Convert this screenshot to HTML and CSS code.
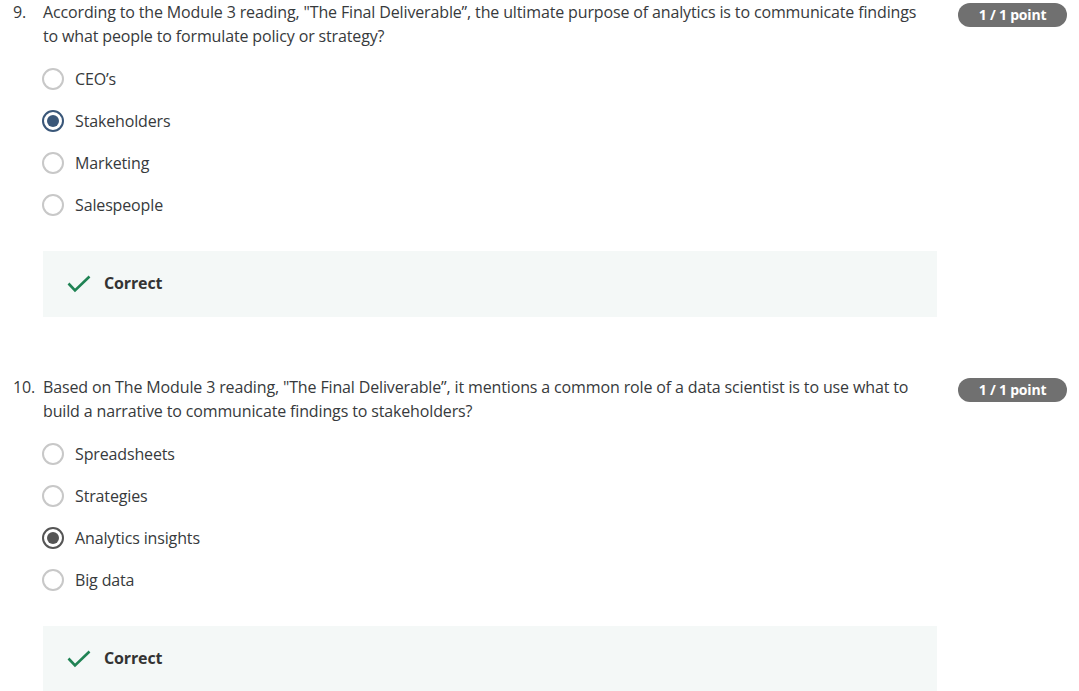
FILE: index.html
```html
<!DOCTYPE html>
<html lang="en">
<head>
<meta charset="utf-8">
<link rel="stylesheet" href="styles.css">
</head>
<body>
<div class="quiz">
  <section class="question">
    <div class="num">9.</div>
    <div class="body">
      <p class="prompt">According to the Module 3 reading, "The Final Deliverable”, the ultimate purpose of analytics is to communicate findings to what people to formulate policy or strategy?</p>
      <ul class="options">
        <li class="option"><span class="radio"></span><span>CEO’s</span></li>
        <li class="option"><span class="radio checked blue"></span><span>Stakeholders</span></li>
        <li class="option"><span class="radio"></span><span>Marketing</span></li>
        <li class="option"><span class="radio"></span><span>Salespeople</span></li>
      </ul>
      <div class="feedback">
        <svg class="check" width="24" height="18" viewBox="0 0 24 18"><polyline points="1.5,8.5 8,15.5 22.5,1.5" fill="none" stroke="#1f8354" stroke-width="2.6"/></svg>
        <span>Correct</span>
      </div>
    </div>
    <div class="badge">1 / 1 point</div>
  </section>
  <section class="question q10">
    <div class="num">10.</div>
    <div class="body">
      <p class="prompt">Based on The Module 3 reading, "The Final Deliverable”, it mentions a common role of a data scientist is to use what to build a narrative to communicate findings to stakeholders?</p>
      <ul class="options">
        <li class="option"><span class="radio"></span><span>Spreadsheets</span></li>
        <li class="option"><span class="radio"></span><span>Strategies</span></li>
        <li class="option"><span class="radio checked gray"></span><span>Analytics insights</span></li>
        <li class="option"><span class="radio"></span><span>Big data</span></li>
      </ul>
      <div class="feedback">
        <svg class="check" width="24" height="18" viewBox="0 0 24 18"><polyline points="1.5,8.5 8,15.5 22.5,1.5" fill="none" stroke="#1f8354" stroke-width="2.6"/></svg>
        <span>Correct</span>
      </div>
    </div>
    <div class="badge">1 / 1 point</div>
  </section>
</div>
</body>
</html>
```
FILE: styles.css
```css
html, body {
  margin: 0;
  padding: 0;
  background: #ffffff;
}
body {
  font-family: "Open Sans", "Noto Sans", sans-serif;
  color: #373a3c;
  font-size: 16px;
  line-height: 24px;
  letter-spacing: -0.14px;
}
.quiz {
  display: flex;
  flex-direction: column;
}
.question {
  display: grid;
  grid-template-columns: 43px 894px 109px;
  column-gap: 0;
}
.q10 {
  margin-top: 58px;
}
.num {
  padding-left: 13px;
}
.prompt {
  margin: 0;
  padding-right: 14px;
}
.options {
  list-style: none;
  margin: 10px 0 0 0;
  padding: 0;
}
.option {
  display: flex;
  align-items: center;
  height: 42px;
  gap: 11px;
}
.radio {
  box-sizing: border-box;
  width: 22px;
  height: 22px;
  border-radius: 50%;
  border: 2px solid #c8c8c8;
  margin-left: -1px;
  display: flex;
  align-items: center;
  justify-content: center;
  flex: none;
}
.radio.checked.blue {
  border-color: #3a5779;
}
.radio.checked.blue::after {
  content: "";
  width: 12px;
  height: 12px;
  border-radius: 50%;
  background: #3a5779;
}
.radio.checked.gray {
  border-color: #555555;
}
.radio.checked.gray::after {
  content: "";
  width: 12px;
  height: 12px;
  border-radius: 50%;
  background: #555555;
}
.feedback {
  margin-top: 25px;
  height: 66px;
  box-sizing: border-box;
  background: #f4f8f7;
  display: flex;
  align-items: center;
  padding-left: 24px;
  padding-bottom: 2px;
  gap: 13px;
  font-weight: 700;
  color: #333333;
}
.check {
  flex: none;
  margin-top: 1px;
}
.badge {
  margin-left: 21px;
  margin-top: 3px;
  width: 109px;
  height: 24px;
  border-radius: 12px;
  background: #707070;
  color: #ffffff;
  font-size: 14px;
  font-weight: 700;
  letter-spacing: -0.2px;
  line-height: 24px;
  text-align: center;
  align-self: start;
}
```
